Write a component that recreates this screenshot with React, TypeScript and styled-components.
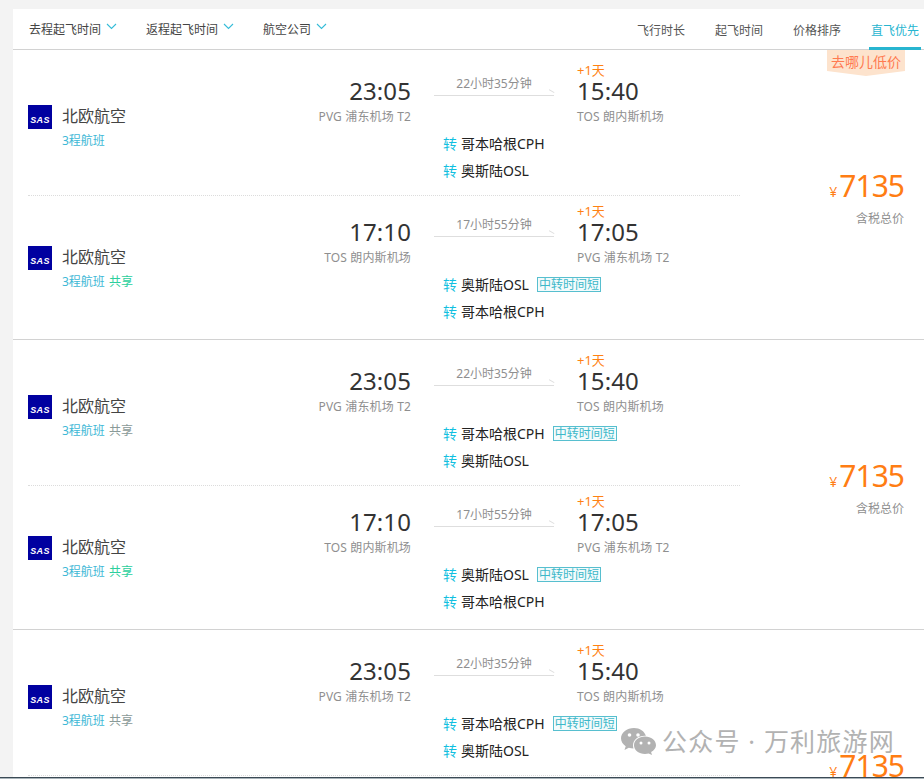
import React from "react";
import styled, { createGlobalStyle } from "styled-components";

const FONT = `"Noto Sans", "Noto Sans CJK SC", sans-serif`;

const Global = createGlobalStyle`
  html, body { margin: 0; padding: 0; height: 779px; overflow: hidden; background: #f3f3f3; }
  body { font-family: ${FONT}; }
  * { box-sizing: border-box; }
`;

const Page = styled.div`
  position: relative;
  height: 779px;
  overflow: hidden;
  padding: 9px 0 0 13px;
`;
const Card = styled.div`
  background: #fff;
`;
const Toolbar = styled.div`
  display: flex;
  justify-content: space-between;
  height: 41px;
  padding: 0 5px 0 16px;
  border-bottom: 1px solid #d2d2d2;
`;
const Filters = styled.div`
  display: flex;
  gap: 29px;
`;
const Filter = styled.div`
  display: flex;
  align-items: center;
  gap: 5px;
  height: 40px;
  padding-bottom: 1px;
  font-size: 12px;
  color: #444;
  svg { margin-top: -5px; }
`;
const Sorts = styled.div`
  display: flex;
  gap: 30px;
`;
const Sort = styled.div<{ $active?: boolean }>`
  height: 41px;
  width: 48px;
  padding-top: 13px;
  font-size: 12px;
  line-height: 18px;
  text-align: center;
  white-space: nowrap;
  color: ${(p) => (p.$active ? "#27b5d0" : "#555")};
  border-bottom: ${(p) => (p.$active ? "3px solid #27b5d0" : "none")};
  ${(p) => (p.$active ? "width: 52px; margin-left: -2px; margin-right: -2px;" : "")}
`;
const Group = styled.section`
  position: relative;
  display: flex;
  height: 290px;
  border-bottom: 1px solid #d2d2d2;
`;
const Legs = styled.div`
  width: 727px;
  padding-left: 15px;
`;
const Leg = styled.div<{ $first?: boolean }>`
  display: grid;
  grid-template-columns: 260px 123px 23px 120px 23px 1fr;
  grid-template-rows: auto 1fr;
  height: ${(p) => (p.$first ? "146px" : "143px")};
  padding-top: ${(p) => (p.$first ? "12px" : "7px")};
  border-bottom: ${(p) => (p.$first ? "1px dotted #dcdcdc" : "none")};
`;
const Airline = styled.div`
  grid-column: 1;
  grid-row: 1 / 3;
  display: flex;
  gap: 10px;
  padding-top: 43px;
`;
const Logo = styled.div`
  display: flex;
  align-items: center;
  justify-content: center;
  width: 24px;
  height: 24px;
  padding-top: 6px;
  background: #0000a0;
  color: #fff;
  font-family: "Liberation Sans", sans-serif;
  font-style: italic;
  font-weight: 700;
  font-size: 9px;
  letter-spacing: 0.3px;
`;
const AirlineName = styled.div`
  font-size: 16px;
  line-height: 22px;
  color: #444;
`;
const FlightInfo = styled.div`
  margin-top: 6px;
  font-size: 12px;
  line-height: 16px;
  color: #3db8d6;
  white-space: nowrap;
`;
const Shared = styled.span<{ $grey?: boolean }>`
  margin-left: 4px;
  color: ${(p) => (p.$grey ? "#8a9a98" : "#2ccf9d")};
`;
const Depart = styled.div`
  grid-column: 2;
  grid-row: 1;
  padding-top: 16px;
  text-align: right;
`;
const Time = styled.div`
  font-size: 24px;
  line-height: 26px;
  letter-spacing: 0.1px;
  color: #333;
`;
const Airport = styled.div`
  margin-top: 5px;
  font-size: 12px;
  line-height: 16px;
  letter-spacing: 0.15px;
  color: #8f8f8f;
  white-space: nowrap;
`;
const Route = styled.div`
  grid-column: 4;
  grid-row: 1;
  padding-top: 14px;
`;
const Duration = styled.div`
  font-size: 12px;
  line-height: 16px;
  color: #8f8f8f;
  text-align: center;
`;
const Line = styled.div`
  position: relative;
  height: 1px;
  margin-top: 3px;
  background: #dedede;
  &::after {
    content: "";
    position: absolute;
    right: 0;
    top: -3px;
    width: 6px;
    height: 1px;
    background: #dedede;
    transform: rotate(30deg);
    transform-origin: right bottom;
  }
`;
const Arrive = styled.div`
  grid-column: 6;
  grid-row: 1;
`;
const DayTag = styled.div`
  font-size: 13px;
  line-height: 16px;
  color: #ff8213;
`;
const Transfers = styled.div`
  grid-column: 3 / 7;
  grid-row: 2;
  padding: 4px 0 0 32px;
`;
const Transfer = styled.div`
  display: flex;
  align-items: center;
  height: 27px;
  font-size: 14px;
  color: #222;
`;
const TransferMark = styled.span`
  margin-right: 4px;
  font-size: 14px;
  color: #12bfe0;
`;
const ShortTag = styled.span`
  margin: 2px 0 0 8px;
  padding: 0 1px;
  height: 15px;
  font-size: 12px;
  line-height: 13px;
  color: #3db8c9;
  border: 1px solid #57bfcf;
  background: #f3fbfc;
`;
const PriceBox = styled.div`
  flex: 1;
  display: flex;
  flex-direction: column;
  align-items: flex-end;
  padding: 116px 20px 0 0;
`;
const Price = styled.div`
  font-size: 30px;
  line-height: 40px;
  letter-spacing: -1px;
  color: #ff7d13;
  white-space: nowrap;
`;
const Yen = styled.span`
  margin-right: 2px;
  font-size: 14px;
  letter-spacing: 0;
`;
const PriceNote = styled.div`
  margin-top: -3px;
  font-size: 12px;
  line-height: 20px;
  color: #8f8f8f;
`;
const PromoTag = styled.div`
  position: absolute;
  top: 0;
  right: 19px;
  width: 78px;
  height: 26px;
  padding-top: 1px;
  font-size: 14px;
  line-height: 21px;
  text-align: center;
  color: #ff7a50;
  background: #fde3cd;
  clip-path: polygon(0 0, 100% 0, 100% 21px, 50% 100%, 0 21px);
`;
const Watermark = styled.div`
  position: absolute;
  left: 621px;
  top: 724px;
  display: flex;
  align-items: center;
  gap: 6px;
  font-size: 25px;
  line-height: 34px;
  letter-spacing: 1.2px;
  color: #b2b2b2;
  white-space: nowrap;
`;
const BottomEdge = styled.div`
  position: absolute;
  left: 0;
  right: 0;
  bottom: 0;
  height: 2px;
  border-top: 1px solid #3b4a55;
  background: #a9b4ba;
`;

const WeChat = () => (
  <svg width="35" height="28" viewBox="0 0 35 28" aria-hidden="true">
    <path d="M13 1C6 1 0 5.600 0 11.300c0 3.200 1.800 6 4.700 8L3.500 23l4.300-2.300c1.500.5 3.100.7 4.700.7-.3-1-.5-1.900-.5-2.900C12 13 17 8.800 23.900 8.800h1C23.500 4.200 18.800 1 13 1z" fill="#b2b2b2" />
    <path d="M35 18.200c0-4.900-4.900-8.800-11-8.800s-11 3.900-11 8.800 4.900 8.800 11 8.800c1.300 0 2.500-.2 3.700-.5L31 28l-.9-3c2.900-1.600 4.900-4 4.900-6.800z" fill="#b2b2b2" />
    <circle cx="8.500" cy="8" r="1.800" fill="#fff" />
    <circle cx="17" cy="8" r="1.800" fill="#fff" />
    <circle cx="20" cy="16" r="1.500" fill="#fff" />
    <circle cx="28" cy="16" r="1.500" fill="#fff" />
  </svg>
);

const Chevron = () => (
  <svg width="11" height="7" viewBox="0 0 11 7" fill="none" aria-hidden="true">
    <path d="M1 1l4.500 4.500L10 1" stroke="#35bcd8" strokeWidth="1.100" />
  </svg>
);

type TransferStop = { name: string; short?: boolean };
type LegData = {
  dep: string;
  depPort: string;
  dur: string;
  arr: string;
  arrPort: string;
  shared?: "green" | "grey";
  stops: TransferStop[];
};

const CPH = "哥本哈根CPH";
const OSL = "奥斯陆OSL";
const outbound = (shared: LegData["shared"], short: boolean): LegData => ({
  dep: "23:05",
  depPort: "PVG 浦东机场 T2",
  dur: "22小时35分钟",
  arr: "15:40",
  arrPort: "TOS 朗内斯机场",
  shared,
  stops: [{ name: CPH, short }, { name: OSL }],
});
const inbound: LegData = {
  dep: "17:10",
  depPort: "TOS 朗内斯机场",
  dur: "17小时55分钟",
  arr: "17:05",
  arrPort: "PVG 浦东机场 T2",
  shared: "green",
  stops: [{ name: OSL, short: true }, { name: CPH }],
};

const groups = [
  { promo: true, legs: [outbound(undefined, false), inbound] },
  { promo: false, legs: [outbound("grey", true), inbound] },
  { promo: false, legs: [outbound("grey", true), inbound] },
];

const LegRow = ({ leg, first }: { leg: LegData; first: boolean }) => (
  <Leg $first={first}>
    <Airline>
      <Logo>SAS</Logo>
      <div>
        <AirlineName>北欧航空</AirlineName>
        <FlightInfo>
          3程航班
          {leg.shared && <Shared $grey={leg.shared === "grey"}>共享</Shared>}
        </FlightInfo>
      </div>
    </Airline>
    <Depart>
      <Time>{leg.dep}</Time>
      <Airport>{leg.depPort}</Airport>
    </Depart>
    <Route>
      <Duration>{leg.dur}</Duration>
      <Line />
    </Route>
    <Arrive>
      <DayTag>+1天</DayTag>
      <Time>{leg.arr}</Time>
      <Airport>{leg.arrPort}</Airport>
    </Arrive>
    <Transfers>
      {leg.stops.map((s) => (
        <Transfer key={s.name}>
          <TransferMark>转</TransferMark>
          {s.name}
          {s.short && <ShortTag>中转时间短</ShortTag>}
        </Transfer>
      ))}
    </Transfers>
  </Leg>
);

export default function App() {
  return (
    <Page>
      <Global />
      <Card>
        <Toolbar>
          <Filters>
            {["去程起飞时间", "返程起飞时间", "航空公司"].map((f) => (
              <Filter key={f}>
                {f}
                <Chevron />
              </Filter>
            ))}
          </Filters>
          <Sorts>
            <Sort>飞行时长</Sort>
            <Sort>起飞时间</Sort>
            <Sort>价格排序</Sort>
            <Sort $active>直飞优先</Sort>
          </Sorts>
        </Toolbar>
        {groups.map((g, i) => (
          <Group key={i}>
            <Legs>
              {g.legs.map((l, j) => (
                <LegRow key={j} leg={l} first={j === 0} />
              ))}
            </Legs>
            <PriceBox>
              <Price>
                <Yen>¥</Yen>7135
              </Price>
              <PriceNote>含税总价</PriceNote>
            </PriceBox>
            {g.promo && <PromoTag>去哪儿低价</PromoTag>}
          </Group>
        ))}
      </Card>
      <Watermark>
        <WeChat />
        公众号 · 万利旅游网
      </Watermark>
      <BottomEdge />
    </Page>
  );
}
